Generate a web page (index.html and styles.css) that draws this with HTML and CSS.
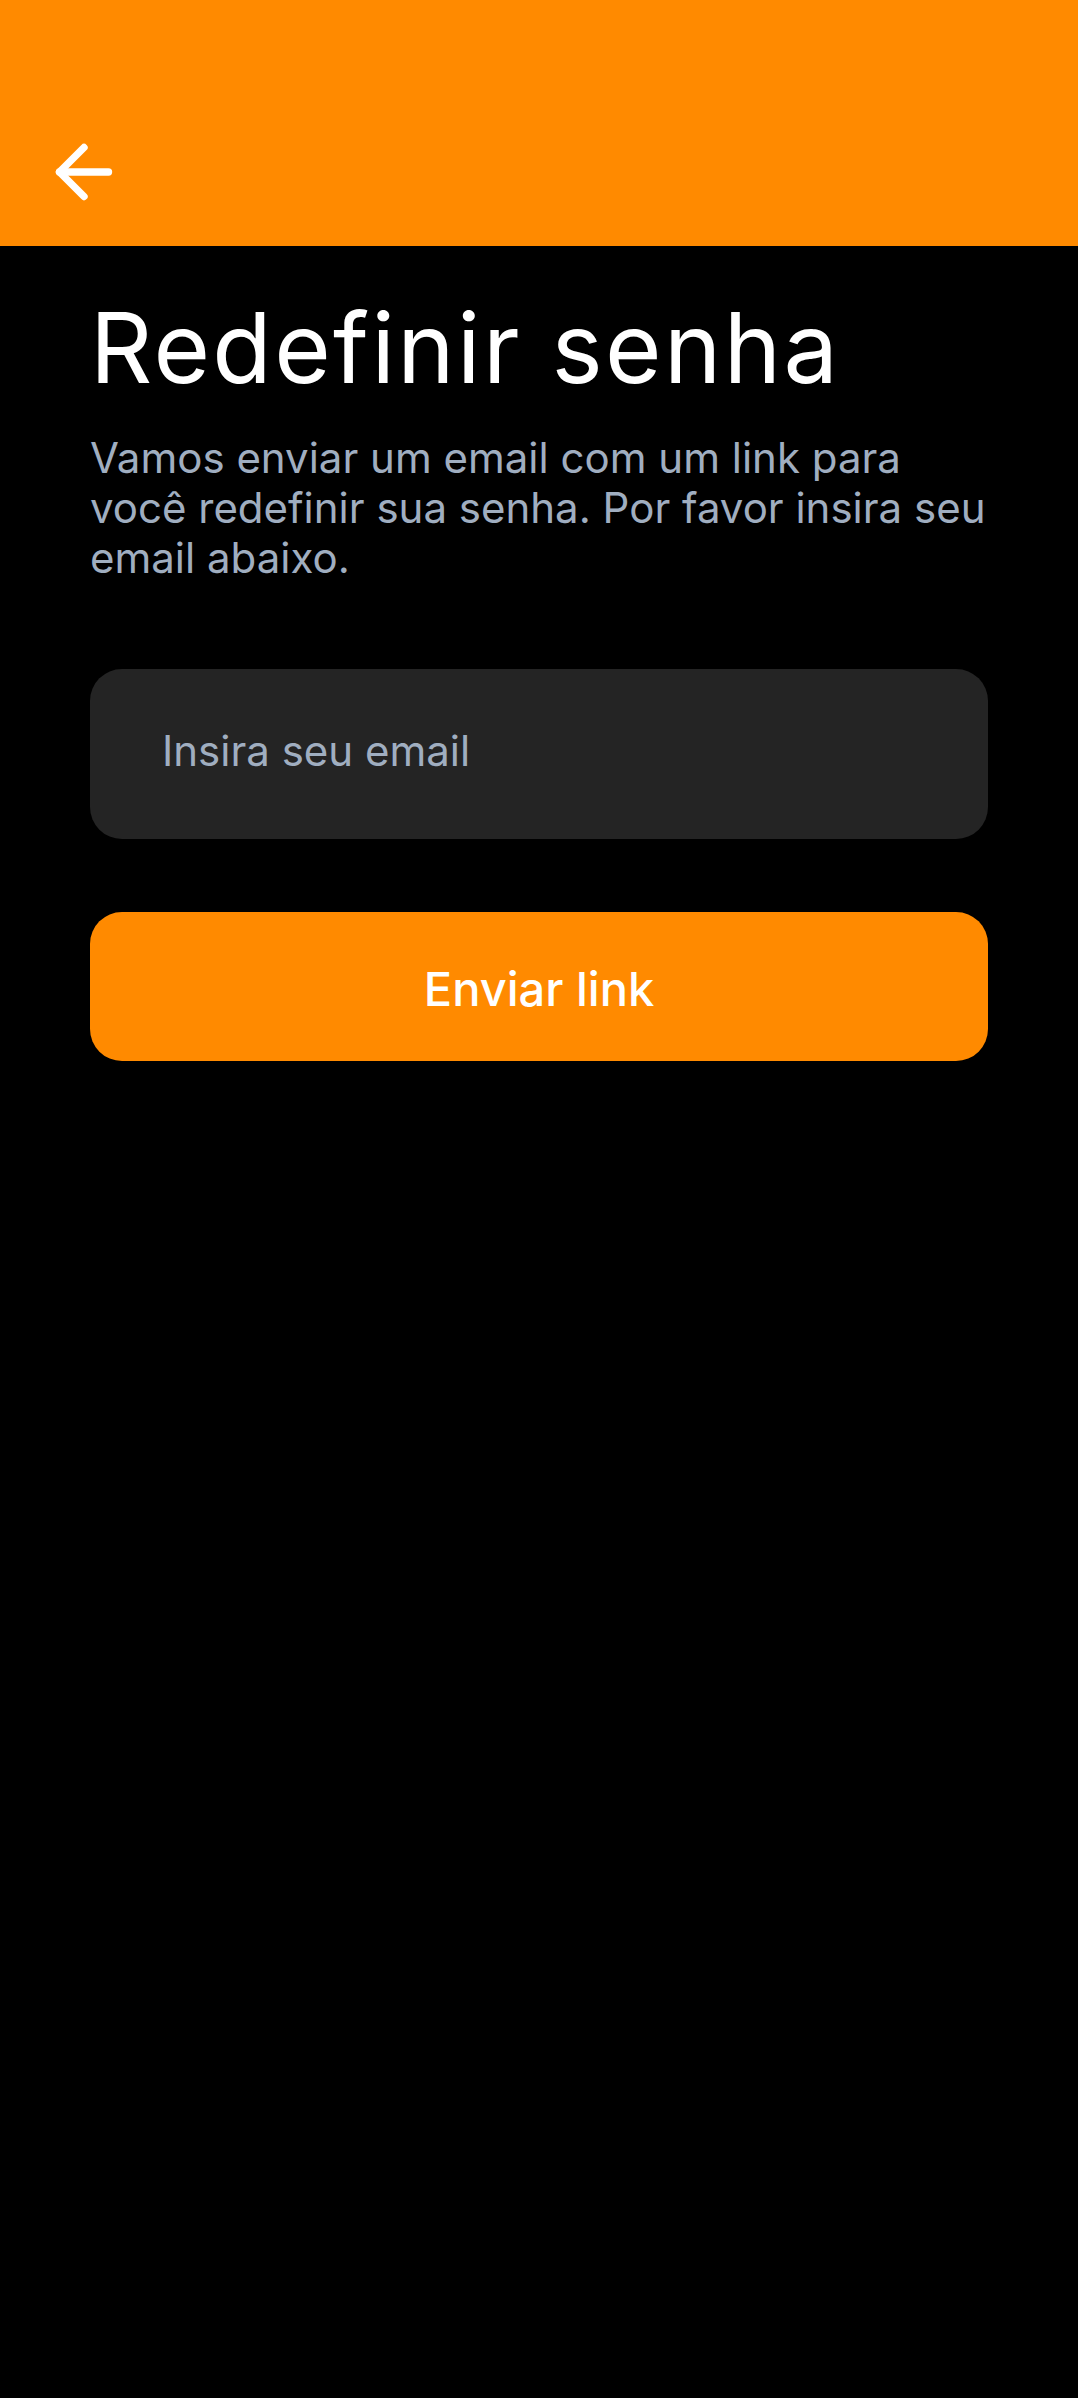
FILE: index.html
```html
<!DOCTYPE html>
<html lang="pt-BR">
<head>
<meta charset="utf-8">
<title>Redefinir senha</title>
<link rel="stylesheet" href="styles.css">
</head>
<body>
<header class="topbar">
  <button class="back" aria-label="Voltar">
    <svg class="back-icon" viewBox="0 0 24 24" fill="none" stroke="#ffffff" stroke-width="2.1" stroke-linecap="round" stroke-linejoin="round">
      <line x1="19" y1="12" x2="5" y2="12"/>
      <polyline points="12 19 5 12 12 5"/>
    </svg>
  </button>
</header>
<main class="content">
  <h1 class="title">Redefinir senha</h1>
  <p class="subtitle">Vamos enviar um email com um link para você redefinir sua senha. Por favor insira seu email abaixo.</p>
  <input class="field" type="email" placeholder="Insira seu email">
  <button class="submit">Enviar link</button>
</main>
</body>
</html>
```
FILE: styles.css
```css
html, body {
  margin: 0;
  padding: 0;
  background: #000000;
}
body {
  min-height: 100vh;
  font-family: Inter, "Noto Sans", "Liberation Sans", sans-serif;
  color: #ffffff;
}
.topbar {
  height: 246px;
  box-sizing: border-box;
  background: #ff8a00;
  padding: 130px 0 0 42px;
}
.back {
  display: block;
  width: 84px;
  height: 84px;
  padding: 0;
  margin: 0;
  border: 0;
  background: transparent;
  cursor: pointer;
}
.back-icon {
  display: block;
  width: 84px;
  height: 84px;
}
.content {
  padding: 44px 90px 0 90px;
  display: flex;
  flex-direction: column;
}
.title {
  margin: 0;
  font-size: 97px;
  line-height: 116px;
  font-weight: 400;
  letter-spacing: 2.4px;
  color: #ffffff;
}
.subtitle {
  margin: 27px 0 0 0;
  font-size: 42px;
  line-height: 50px;
  font-weight: 400;
  color: #a0aec0;
}
.field {
  margin: 86px 0 0 0;
  height: 170px;
  box-sizing: border-box;
  width: 100%;
  border: 0;
  outline: none;
  border-radius: 32px;
  background: #242424;
  padding: 0 0 8px 72px;
  font-family: inherit;
  font-size: 42px;
  color: #ffffff;
}
.field::placeholder {
  color: #a0aec0;
  opacity: 1;
}
.submit {
  margin: 73px 0 0 0;
  height: 149px;
  width: 100%;
  border: 0;
  border-radius: 32px;
  background: #ff8a00;
  color: #ffffff;
  font-family: inherit;
  font-size: 47px;
  font-weight: 500;
  padding: 4px 0 0 0;
  cursor: pointer;
}
```
